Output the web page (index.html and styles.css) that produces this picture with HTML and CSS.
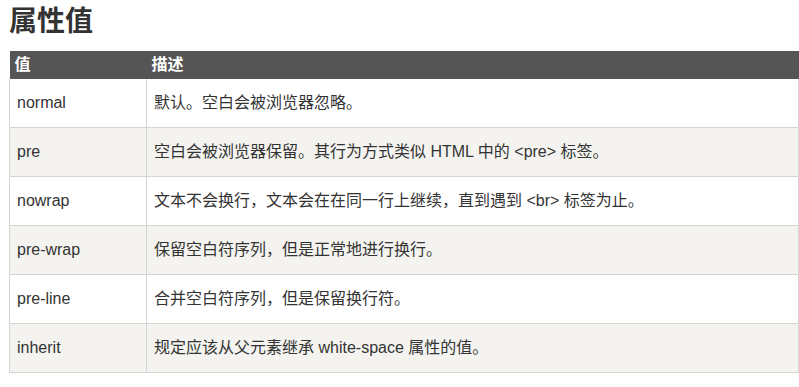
FILE: index.html
```html
<!DOCTYPE html>
<html lang="zh-CN">
<head>
<meta charset="utf-8">
<title>属性值</title>
<link rel="stylesheet" href="styles.css">
</head>
<body>
<div class="page">
  <h2 class="title">属性值</h2>
  <table class="datatable">
    <colgroup>
      <col class="col-value">
      <col class="col-desc">
    </colgroup>
    <thead>
      <tr><th>值</th><th>描述</th></tr>
    </thead>
    <tbody>
      <tr><td>normal</td><td>默认。空白会被浏览器忽略。</td></tr>
      <tr class="alt"><td>pre</td><td>空白会被浏览器保留。其行为方式类似 HTML 中的 &lt;pre&gt; 标签。</td></tr>
      <tr><td>nowrap</td><td>文本不会换行，文本会在在同一行上继续，直到遇到 &lt;br&gt; 标签为止。</td></tr>
      <tr class="alt"><td>pre-wrap</td><td>保留空白符序列，但是正常地进行换行。</td></tr>
      <tr><td>pre-line</td><td>合并空白符序列，但是保留换行符。</td></tr>
      <tr class="alt"><td>inherit</td><td>规定应该从父元素继承 white-space 属性的值。</td></tr>
    </tbody>
  </table>
</div>
</body>
</html>
```
FILE: styles.css
```css
html, body {
  margin: 0;
  padding: 0;
  background: #fff;
}
body {
  font-family: "Liberation Sans", "Noto Sans CJK SC", sans-serif;
  color: #333;
  overflow: hidden;
}
.page {
  padding: 0 0 0 9px;
  width: 790px;
}
.title {
  margin: 0 0 7px 0;
  font-size: 28px;
  line-height: 44px;
  font-weight: bold;
  color: #333;
}
.datatable {
  border-collapse: collapse;
  table-layout: fixed;
  width: 790px;
  font-size: 16px;
  line-height: 18px;
}
.col-value { width: 137px; }
.datatable th {
  background: #555;
  color: #fff;
  font-weight: bold;
  text-align: left;
  padding: 5px 5px;
  border: 0;
}
.datatable td {
  padding: 15px 7px;
  border: 1px solid #d4d4d4;
  border-top: 0;
  white-space: nowrap;
  vertical-align: middle;
}
.datatable tr.alt td {
  background: #f4f3f0;
}
```
